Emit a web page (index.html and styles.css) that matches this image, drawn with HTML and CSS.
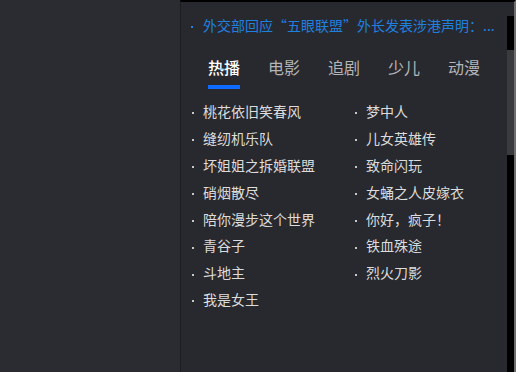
FILE: index.html
```html
<!DOCTYPE html>
<html lang="zh-CN">
<head>
  <meta charset="UTF-8">
  <meta name="viewport" content="width=device-width, initial-scale=1.0">
  <title>热播</title>
  <link rel="stylesheet" href="styles.css">
</head>
<body>
  <div class="side"></div>
  <div class="panel">
    <div class="content">
      <div class="ticker"><span class="dot"></span>外交部回应“五眼联盟”外长发表涉港声明：...</div>
      <div class="tabs">
        <span class="tab active">热播</span>
        <span class="tab">电影</span>
        <span class="tab">追剧</span>
        <span class="tab">少儿</span>
        <span class="tab">动漫</span>
      </div>
      <ul class="list">
        <li>桃花依旧笑春风</li>
        <li>缝纫机乐队</li>
        <li>坏姐姐之拆婚联盟</li>
        <li>硝烟散尽</li>
        <li>陪你漫步这个世界</li>
        <li>青谷子</li>
        <li>斗地主</li>
        <li>我是女王</li>
        <li>梦中人</li>
        <li>儿女英雄传</li>
        <li>致命闪玩</li>
        <li>女蛹之人皮嫁衣</li>
        <li>你好，疯子！</li>
        <li>铁血殊途</li>
        <li>烈火刀影</li>
      </ul>
    </div>
    <div class="scrollbar"><div class="thumb"></div></div>
  </div>
</body>
</html>
```

FILE: styles.css
```css
html, body {
  height: 100%;
}

body {
  margin: 0;
  display: flex;
  background: #2b2c31;
  font-family: "Noto Sans CJK SC", "Noto Sans", sans-serif;
  overflow: hidden;
}

.side {
  width: 180px;
  flex-shrink: 0;
}

.panel {
  flex: 1;
  min-width: 0;
  display: flex;
  background: #28292e;
  border-left: 1px solid #1c1d20;
  border-top: 2px solid #000;
  border-right: 2px solid #6e6e6e;
}

.content {
  flex: 1;
  min-width: 0;
  padding-left: 10px;
  overflow: hidden;
}

.ticker {
  margin-top: 13px;
  font-size: 14px;
  line-height: 20px;
  color: #1f80e0;
  white-space: nowrap;
}

.dot {
  display: inline-block;
  width: 2px;
  height: 2px;
  background: currentColor;
  vertical-align: middle;
  margin-right: 10px;
}

.tabs {
  display: flex;
  gap: 28px;
  margin-top: 21px;
  padding-left: 17px;
}

.tab {
  font-size: 16px;
  line-height: 22px;
  color: #b4b5b8;
  padding-bottom: 11px;
}

.tab.active {
  color: #fff;
  font-weight: 500;
  border-bottom: 4px solid #0f6bff;
  padding-bottom: 7px;
}

.list {
  list-style: none;
  margin: 9px 0 0;
  padding: 0 0 0 1px;
  display: grid;
  grid-template-columns: 163px 163px;
  grid-template-rows: repeat(8, 26.9px);
  grid-auto-flow: column;
}

.list li {
  font-size: 14px;
  line-height: 26.9px;
  color: #dcdcdc;
  white-space: nowrap;
}

.list li::before {
  content: "";
  display: inline-block;
  width: 2px;
  height: 2px;
  background: #c8c8c8;
  vertical-align: middle;
  margin-right: 9px;
}

.scrollbar {
  width: 7px;
  flex-shrink: 0;
  margin-top: 14px;
  background: #000;
}

.thumb {
  margin-top: 34px;
  height: 105px;
  background: #3a3b3e;
}
```
